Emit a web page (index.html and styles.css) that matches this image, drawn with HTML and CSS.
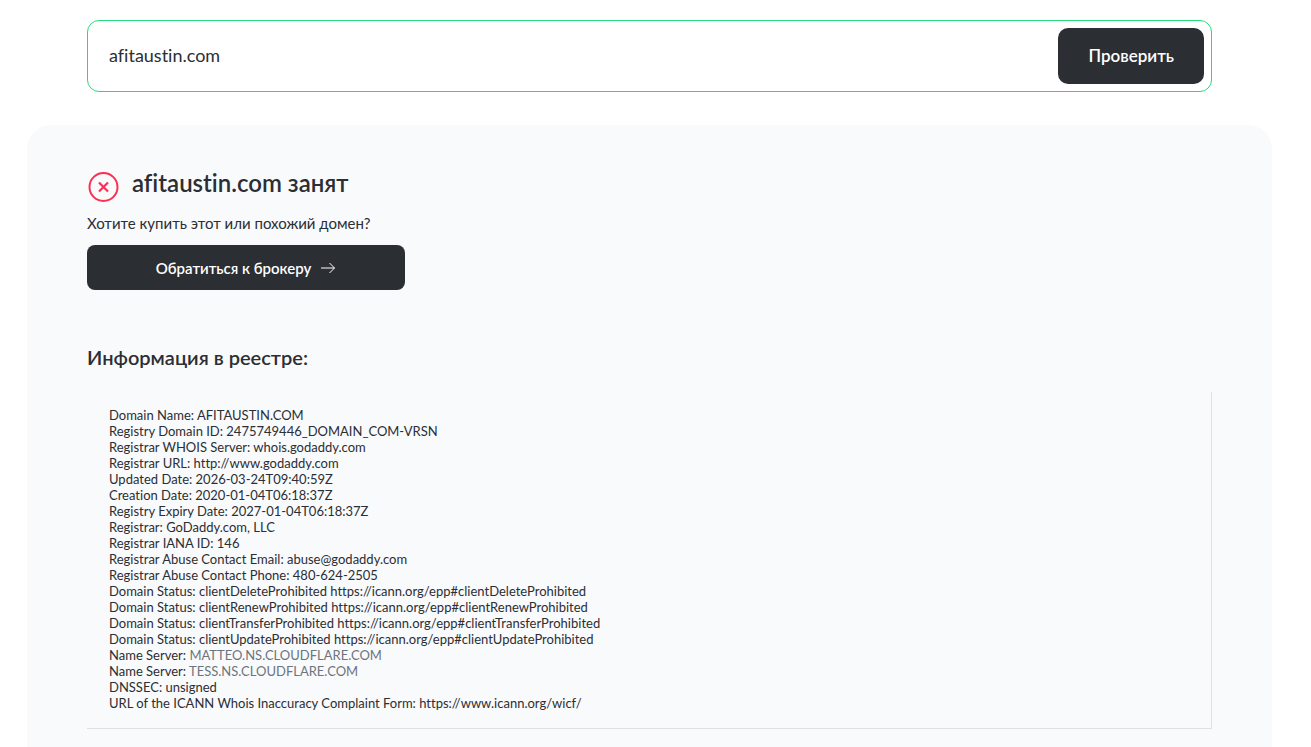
FILE: index.html
```html
<!DOCTYPE html>
<html lang="ru">
<head>
    <meta charset="UTF-8" />
    <meta name="viewport" content="width=device-width, initial-scale=1.0" />
    <title>Whois afitaustin.com</title>
    <link rel="stylesheet" href="styles.css">
</head>
<body>
    <main class="page">
      <form class="search">
        <input class="search-input" type="text" name="domain" value="afitaustin.com" aria-label="Домен" />
        <button class="search-btn" type="submit">Проверить</button>
      </form>

      <section class="result">
        <div class="status">
          <svg class="status-icon" width="33" height="32" viewBox="0 0 33 32" fill="none" stroke="#fc2f55" stroke-width="2" aria-hidden="true">
            <circle cx="16.5" cy="16" r="14" />
            <path d="M12 11.5l9 9M21 11.5l-9 9" stroke-width="2.2" />
          </svg>
          <h1 class="status-title">afitaustin.com занят</h1>
        </div>
        <p class="question">Хотите купить этот или похожий домен?</p>
        <a class="broker" href="#">
          Обратиться к брокеру
          <svg width="16" height="12" viewBox="0 0 16 12" fill="none" stroke="#fff" aria-hidden="true">
            <path d="M1 6h13.5M9.5 1l5 5-5 5" />
          </svg>
        </a>

        <h2 class="registry-title">Информация в реестре:</h2>
        <pre class="whois">Domain Name: AFITAUSTIN.COM
Registry Domain ID: 2475749446_DOMAIN_COM-VRSN
Registrar WHOIS Server: whois.godaddy.com
Registrar URL: http://www.godaddy.com
Updated Date: 2026-03-24T09:40:59Z
Creation Date: 2020-01-04T06:18:37Z
Registry Expiry Date: 2027-01-04T06:18:37Z
Registrar: GoDaddy.com, LLC
Registrar IANA ID: 146
Registrar Abuse Contact Email: abuse@godaddy.com
Registrar Abuse Contact Phone: 480-624-2505
Domain Status: clientDeleteProhibited https://icann.org/epp#clientDeleteProhibited
Domain Status: clientRenewProhibited https://icann.org/epp#clientRenewProhibited
Domain Status: clientTransferProhibited https://icann.org/epp#clientTransferProhibited
Domain Status: clientUpdateProhibited https://icann.org/epp#clientUpdateProhibited
Name Server: <a href="#">MATTEO.NS.CLOUDFLARE.COM</a>
Name Server: <a href="#">TESS.NS.CLOUDFLARE.COM</a>
DNSSEC: unsigned
URL of the ICANN Whois Inaccuracy Complaint Form: https://www.icann.org/wicf/</pre>
      </section>
    </main>
</body>
</html>
```
FILE: styles.css
```css
* {
  margin: 0;
  padding: 0;
  box-sizing: border-box;
}

body {
  font-family: Lato, "Open Sans", sans-serif;
  font-size: 15px;
  line-height: 20px;
  font-variant-ligatures: none;
  background: #fff;
  color: #2b2e33;
}

.page {
  padding: 20px 39px 0 27px;
}

/* Search form */
.search {
  display: flex;
  align-items: center;
  height: 72px;
  margin: 0 60px 33px;
  padding: 0 7px 0 21px;
  border: 1px solid #25dc7d;
  border-radius: 12px;
}

.search-input {
  flex: 1;
  min-width: 0;
  height: 56px;
  padding-bottom: 2px;
  border: none;
  outline: none;
  background: none;
  font-family: inherit;
  font-size: 18px;
  font-variant-ligatures: none;
  color: #2b2e33;
}

.search-btn {
  height: 56px;
  padding: 0 30px 2px;
  border: none;
  border-radius: 10px;
  background: #2b2e33;
  color: #fff;
  font-family: inherit;
  font-size: 17px;
  font-weight: 600;
  cursor: pointer;
}

/* Result */
.result {
  padding: 42px 60px 18px;
  border-radius: 24px 24px 0 0;
  background: #f9fafc;
}

.status {
  display: flex;
  gap: 12px;
}

.status-icon {
  margin-top: 4px;
}

.status-title {
  font-size: 24px;
  font-weight: 600;
  line-height: 32px;
}

.question {
  margin: 10px 0 12px;
}

.broker {
  display: flex;
  align-items: center;
  justify-content: center;
  gap: 9px;
  width: 318px;
  max-width: 100%;
  height: 45px;
  border-radius: 8px;
  background: #2b2e33;
  color: #fff;
  font-weight: 600;
  text-decoration: none;
}

.registry-title {
  margin: 55px 0 23px;
  font-size: 20px;
  font-weight: 600;
  line-height: 24px;
}

.whois {
  padding: 15px 22px 17px;
  border-right: 1px solid #dee0e2;
  border-bottom: 1px solid #dee0e2;
  font-family: inherit;
  font-size: 13px;
  line-height: 16px;
  white-space: pre-wrap;
}

.whois a {
  color: #6c757d;
  text-decoration: none;
}
```
